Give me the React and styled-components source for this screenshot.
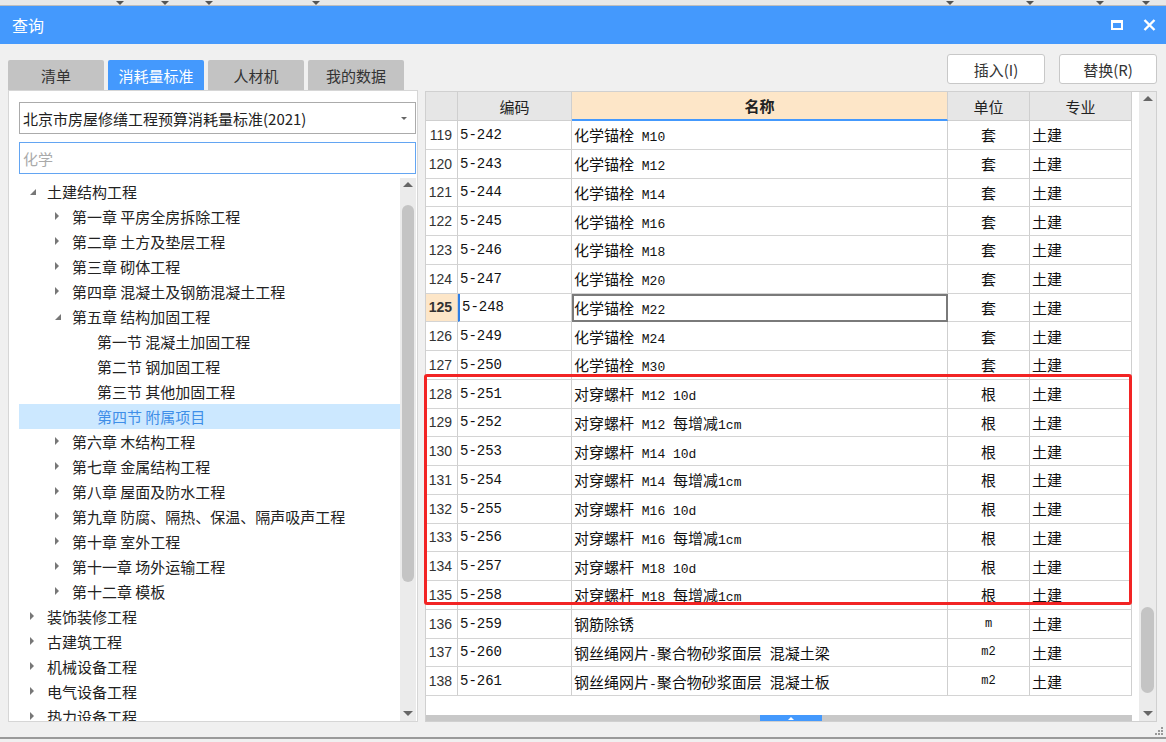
import React from 'react'
import styled, { createGlobalStyle } from 'styled-components'

const GlobalStyle = createGlobalStyle`
    html, body { margin:0; padding:0; }
    body {
        width:1166px;
        height:742px;
        overflow:hidden;
        background:#f0f0f0;
        font-family:"Noto Sans CJK SC", "Liberation Sans", sans-serif;
    }
`;

const tree = [
    { lv: 0, open: true, text: '土建结构工程' },
    { lv: 1, text: '第一章 平房全房拆除工程' },
    { lv: 1, text: '第二章 土方及垫层工程' },
    { lv: 1, text: '第三章 砌体工程' },
    { lv: 1, text: '第四章 混凝土及钢筋混凝土工程' },
    { lv: 1, open: true, text: '第五章 结构加固工程' },
    { lv: 2, leaf: true, text: '第一节 混凝土加固工程' },
    { lv: 2, leaf: true, text: '第二节 钢加固工程' },
    { lv: 2, leaf: true, text: '第三节 其他加固工程' },
    { lv: 2, leaf: true, sel: true, text: '第四节 附属项目' },
    { lv: 1, text: '第六章 木结构工程' },
    { lv: 1, text: '第七章 金属结构工程' },
    { lv: 1, text: '第八章 屋面及防水工程' },
    { lv: 1, text: '第九章 防腐、隔热、保温、隔声吸声工程' },
    { lv: 1, text: '第十章 室外工程' },
    { lv: 1, text: '第十一章 场外运输工程' },
    { lv: 1, text: '第十二章 模板' },
    { lv: 0, text: '装饰装修工程' },
    { lv: 0, text: '古建筑工程' },
    { lv: 0, text: '机械设备工程' },
    { lv: 0, text: '电气设备工程' },
    { lv: 0, text: '热力设备工程' },
];

const rows = [
    [119, '5-242', '化学锚栓 M10', '套'],
    [120, '5-243', '化学锚栓 M12', '套'],
    [121, '5-244', '化学锚栓 M14', '套'],
    [122, '5-245', '化学锚栓 M16', '套'],
    [123, '5-246', '化学锚栓 M18', '套'],
    [124, '5-247', '化学锚栓 M20', '套'],
    [125, '5-248', '化学锚栓 M22', '套'],
    [126, '5-249', '化学锚栓 M24', '套'],
    [127, '5-250', '化学锚栓 M30', '套'],
    [128, '5-251', '对穿螺杆 M12 10d', '根'],
    [129, '5-252', '对穿螺杆 M12 每增减1cm', '根'],
    [130, '5-253', '对穿螺杆 M14 10d', '根'],
    [131, '5-254', '对穿螺杆 M14 每增减1cm', '根'],
    [132, '5-255', '对穿螺杆 M16 10d', '根'],
    [133, '5-256', '对穿螺杆 M16 每增减1cm', '根'],
    [134, '5-257', '对穿螺杆 M18 10d', '根'],
    [135, '5-258', '对穿螺杆 M18 每增减1cm', '根'],
    [136, '5-259', '钢筋除锈', 'm'],
    [137, '5-260', '钢丝绳网片-聚合物砂浆面层 混凝土梁', 'm2'],
    [138, '5-261', '钢丝绳网片-聚合物砂浆面层 混凝土板', 'm2'],
];

// split a name into runs of CJK and latin text, the latin parts get the narrow mono face
const runs = (s) => s.match(/[\x20-\x7e]+|[^\x20-\x7e]+/g) || [];

const App = () => {
    return (
        <Window>
            <GlobalStyle />
            <TopStrip>
                {[116, 161, 205, 312, 946, 1026, 1096, 1142].map(x => <Notch key={x} style={{ left: x }} />)}
            </TopStrip>
            <TitleBar>
                <span>查询</span>
                <TitleIcons>
                    <MaxIcon />
                    <svg width="13" height="12" viewBox="0 0 13 12">
                        <path d="M1.5 1L11.5 11M11.5 1L1.5 11" stroke="#fff" strokeWidth="2.4" />
                    </svg>
                </TitleIcons>
            </TitleBar>
            <Body>
                <LeftCol>
                    <Tabs>
                        <Tab>清单</Tab>
                        <Tab active>消耗量标准</Tab>
                        <Tab>人材机</Tab>
                        <Tab>我的数据</Tab>
                    </Tabs>
                    <LeftPanel>
                        <Select>
                            <span>北京市房屋修缮工程预算消耗量标准(2021)</span>
                            <Caret />
                        </Select>
                        <Search placeholder="化学" />
                        <TreeWrap>
                            <TreeList>
                                {tree.map((t, i) => (
                                    <TreeRow key={i} lv={t.lv} sel={t.sel}>
                                        <ArrowSlot>
                                            {!t.leaf && (t.open ? <OpenArrow /> : <ClosedArrow />)}
                                        </ArrowSlot>
                                        <span>{t.text}</span>
                                    </TreeRow>
                                ))}
                            </TreeList>
                            <VScroll>
                                <ArrowUp />
                                <Track><Thumb top={15} height={377} /></Track>
                                <ArrowDown />
                            </VScroll>
                        </TreeWrap>
                    </LeftPanel>
                </LeftCol>
                <RightCol>
                    <Buttons>
                        <Button>插入(I)</Button>
                        <Button>替换(R)</Button>
                    </Buttons>
                    <TableBox>
                        <TableArea>
                            <Grid>
                                <HeadCell />
                                <HeadCell>编码</HeadCell>
                                <HeadCell active>名称</HeadCell>
                                <HeadCell>单位</HeadCell>
                                <HeadCell>专业</HeadCell>
                                {rows.map(r => {
                                    const cur = r[0] === 125;
                                    return (
                                        <React.Fragment key={r[0]}>
                                            <NumCell cur={cur}>{r[0]}</NumCell>
                                            <Cell cur={cur} code>{r[1]}</Cell>
                                            <Cell focus={cur}>
                                                <span>
                                                    {runs(r[2]).map((part, k) =>
                                                        /^[\x20-\x7e]+$/.test(part)
                                                            ? <Latin key={k}>{part}</Latin>
                                                            : <React.Fragment key={k}>{part}</React.Fragment>
                                                    )}
                                                </span>
                                            </Cell>
                                            <Cell center small={r[3].startsWith('m')}>{r[3]}</Cell>
                                            <Cell>土建</Cell>
                                        </React.Fragment>
                                    )
                                })}
                            </Grid>
                            <RedBox />
                            <HScroll><HThumb><ThumbTri /></HThumb></HScroll>
                        </TableArea>
                        <VScroll wide>
                            <ArrowUp />
                            <Track><Thumb top={503} height={86} /></Track>
                            <ArrowDown />
                        </VScroll>
                    </TableBox>
                </RightCol>
            </Body>
            <BottomLine />
            <Grip>
                <svg width="10" height="10" viewBox="0 0 10 10">
                    {[[8, 2], [8, 5], [5, 5], [8, 8], [5, 8], [2, 8]].map(([x, y]) => (
                        <rect key={x + '-' + y} x={x - 1} y={y - 1} width="2" height="2" fill="#999" />
                    ))}
                </svg>
            </Grip>
        </Window>
    )
}

export default App

const Window = styled.div`
    position:relative;
    width:1166px;
    height:742px;
    background:#f0f0f0;
    color:#222;
`;
const TopStrip = styled.div`
    position:relative;
    height:5px;
    background:#e8e8e8;
    border-bottom:1px solid #bdbdbd;
`;
const Notch = styled.div`
    position:absolute;
    top:1px;
    width:0;
    height:0;
    border-left:4px solid transparent;
    border-right:4px solid transparent;
    border-top:4px solid #555;
`;
const TitleBar = styled.div`
    height:38px;
    background:#4499fd;
    color:#fff;
    font-size:16px;
    display:flex;
    align-items:center;
    justify-content:space-between;
    padding:0 10px 0 12px;
`;
const TitleIcons = styled.div`
    display:flex;
    align-items:center;
    gap:20px;
`;
const MaxIcon = styled.div`
    width:8px;
    height:5px;
    border:2px solid #fff;
    border-top-width:3px;
`;
const Body = styled.div`
    display:flex;
    gap:7px;
    padding:0 9px 0 8px;
    height:678px;
`;
const LeftCol = styled.div`
    width:410px;
    display:flex;
    flex-direction:column;
    padding-top:16px;
`;
const Tabs = styled.div`
    display:flex;
    gap:4px;
    height:30px;
`;
const Tab = styled.div`
    width:96px;
    display:flex;
    align-items:center;
    justify-content:center;
    font-size:15px;
    border-radius:2px 2px 0 0;
    background:${p => p.active ? '#4499fd' : '#c3c3c3'};
    color:${p => p.active ? '#fff' : '#333'};
`;
const LeftPanel = styled.div`
    height:632px;
    box-sizing:border-box;
    background:#fff;
    border:1px solid #d6d6d6;
    padding:11px 1px 0 10px;
    display:flex;
    flex-direction:column;
`;
const Select = styled.div`
    height:32px;
    box-sizing:border-box;
    border:1px solid #ababab;
    display:flex;
    align-items:center;
    justify-content:space-between;
    padding:0 8px 0 3px;
    font-size:15px;
    color:#222;
`;
const Caret = styled.div`
    width:0;
    height:0;
    border-left:3px solid transparent;
    border-right:3px solid transparent;
    border-top:3px solid #666;
`;
const Search = styled.input`
    margin-top:8px;
    height:32px;
    box-sizing:border-box;
    border:1px solid #63a5f2;
    padding:0 3px;
    font-size:15px;
    font-family:inherit;
    outline:none;
    &::placeholder { color:#aaa; }
`;
const TreeWrap = styled.div`
    margin-top:4px;
    flex:1;
    display:flex;
    overflow:hidden;
`;
const TreeList = styled.div`
    flex:1;
    padding-top:0.5px;
    overflow:hidden;
`;
const TreeRow = styled.div`
    height:25px;
    display:flex;
    align-items:center;
    font-size:15px;
    white-space:nowrap;
    padding-left:${p => 9 + p.lv * 25}px;
    background:${p => p.sel ? '#cce8ff' : 'transparent'};
    color:${p => p.sel ? '#3f8fe8' : '#222'};
`;
const ArrowSlot = styled.div`
    width:19px;
    flex:none;
    display:flex;
    align-items:center;
    padding-left:2px;
    box-sizing:border-box;
`;
const ClosedArrow = styled.div`
    width:0;
    height:0;
    border-top:4px solid transparent;
    border-bottom:4px solid transparent;
    border-left:4px solid #777;
`;
const OpenArrow = styled.div`
    width:0;
    height:0;
    border-left:6px solid transparent;
    border-bottom:6px solid #777;
    margin-top:2px;
`;
const VScroll = styled.div`
    width:${p => p.wide ? 18 : 16}px;
    margin-left:${p => p.wide ? 7 : 0}px;
    background:#ebebeb;
    display:flex;
    flex-direction:column;
    align-items:center;
`;
const ArrowUp = styled.div`
    margin:4px 0 3px;
    width:0;
    height:0;
    border-left:5px solid transparent;
    border-right:5px solid transparent;
    border-bottom:5px solid #666;
`;
const ArrowDown = styled.div`
    margin:3px 0 5px;
    width:0;
    height:0;
    border-left:5px solid transparent;
    border-right:5px solid transparent;
    border-top:5px solid #666;
`;
const Track = styled.div`
    flex:1;
    width:100%;
    position:relative;
`;
const Thumb = styled.div`
    position:absolute;
    left:2px;
    right:2px;
    top:${p => p.top}px;
    height:${p => p.height}px;
    border-radius:8px;
    background:#c4c4c4;
`;
const RightCol = styled.div`
    width:732px;
    display:flex;
    flex-direction:column;
    padding-top:10px;
`;
const Buttons = styled.div`
    display:flex;
    justify-content:flex-end;
    gap:14px;
    height:30px;
`;
const Button = styled.div`
    width:98px;
    box-sizing:border-box;
    border:1px solid #c8c8c8;
    border-radius:3px;
    background:#fff;
    display:flex;
    align-items:center;
    justify-content:center;
    font-size:15px;
    color:#333;
`;
const TableBox = styled.div`
    margin-top:7px;
    height:631px;
    box-sizing:border-box;
    background:#fff;
    border:1px solid #d0d0d0;
    display:flex;
`;
const TableArea = styled.div`
    position:relative;
    flex:1;
    display:flex;
    flex-direction:column;
`;
const Grid = styled.div`
    flex:1;
    display:grid;
    grid-template-columns:32px 114px 376px 82px 102px;
    grid-template-rows:29px repeat(20, 28.75px);
    align-content:start;
    width:706px;
`;
const HeadCell = styled.div`
    box-sizing:border-box;
    display:flex;
    align-items:center;
    justify-content:center;
    font-size:15px;
    font-weight:${p => p.active ? 700 : 400};
    color:#222;
    background:${p => p.active ? '#fde6c8' : '#e6e6e6'};
    border-right:1px solid #cfcfcf;
    border-bottom:${p => p.active ? '2px solid #4499fd' : '1px solid #cfcfcf'};
`;
const NumCell = styled.div`
    box-sizing:border-box;
    display:flex;
    align-items:center;
    justify-content:flex-end;
    padding-right:5px;
    font-family:"Liberation Sans", sans-serif;
    font-size:14px;
    font-weight:${p => p.cur ? 700 : 400};
    color:#333;
    background:${p => p.cur ? '#fde6c8' : '#fff'};
    border-right:1px solid #cfcfcf;
    border-bottom:1px solid #d4d4d4;
`;
const Cell = styled.div`
    box-sizing:border-box;
    display:flex;
    align-items:center;
    justify-content:${p => p.center ? 'center' : 'flex-start'};
    padding-left:${p => p.center ? 0 : 2}px;
    white-space:pre;
    overflow:hidden;
    font-family:${p => p.code || p.small ? '"Liberation Mono", monospace' : '"Noto Sans CJK SC", sans-serif'};
    font-size:${p => p.small ? 12 : p.code ? 14 : 15}px;
    color:#111;
    border-right:1px solid #cfcfcf;
    border-bottom:1px solid #d4d4d4;
    border-left:${p => p.cur ? '2px solid #2f7fe6' : 'none'};
    outline:${p => p.focus ? '2px solid #7a7a7a' : 'none'};
    outline-offset:-2px;
`;
const Latin = styled.span`
    font-family:"Liberation Mono", monospace;
    font-size:13px;
`;
const RedBox = styled.div`
    position:absolute;
    left:-2px;
    top:282px;
    width:708px;
    height:231px;
    box-sizing:border-box;
    border:3px solid #f22424;
    border-radius:3px;
    pointer-events:none;
`;
const HScroll = styled.div`
    height:6px;
    background:#c8c8c8;
    display:flex;
    justify-content:flex-start;
    padding-left:334px;
`;
const HThumb = styled.div`
    width:62px;
    height:100%;
    background:#4499fd;
    display:flex;
    justify-content:center;
    align-items:center;
`;
const ThumbTri = styled.div`
    width:0;
    height:0;
    border-left:3px solid transparent;
    border-right:3px solid transparent;
    border-bottom:3px solid #fff;
`;
const BottomLine = styled.div`
    margin-top:15px;
    height:2px;
    background:#9a9a9a;
`;
const Grip = styled.div`
    position:absolute;
    right:2px;
    bottom:6px;
    display:flex;
`;
